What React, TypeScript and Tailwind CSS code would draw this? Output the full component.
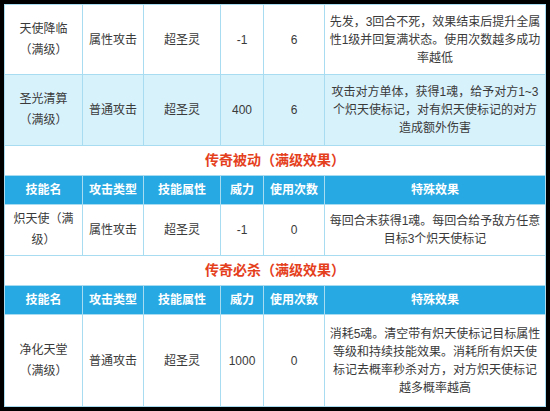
import React from "react";

const cell = "border border-[#a8dcf1] text-center align-middle p-0";

function Lines({ lines, cls }: { lines: string[]; cls: string }) {
  return (
    <div className={cls}>
      {lines.map((l, i) => (
        <div key={i} className="whitespace-nowrap">
          {l}
        </div>
      ))}
    </div>
  );
}

function SkillRow({
  name,
  type,
  attr,
  power,
  times,
  effect,
  h,
  bg,
}: {
  name: string[];
  type: string;
  attr: string;
  power: string;
  times: string;
  effect: string[];
  h: string;
  bg: string;
}) {
  return (
    <tr className={`${h} ${bg}`}>
      <td className={cell}>
        <Lines lines={name} cls="leading-[21px]" />
      </td>
      <td className={cell}>{type}</td>
      <td className={cell}>{attr}</td>
      <td className={cell}>{power}</td>
      <td className={cell}>{times}</td>
      <td className={cell}>
        <Lines lines={effect} cls="leading-[18px]" />
      </td>
    </tr>
  );
}

function Title({ text }: { text: string }) {
  return (
    <tr className="h-[30px] bg-white">
      <td
        colSpan={6}
        className="border border-[#a8dcf1] text-center align-middle p-0 text-[14px] font-bold text-[#e5401d]"
      >
        {text}
      </td>
    </tr>
  );
}

function Header() {
  const hc =
    "border border-[#a8dcf1] text-center align-middle p-0 text-white font-bold text-[12px]";
  return (
    <tr className="h-[29px] bg-[#27a9e3]">
      <th className={hc}>技能名</th>
      <th className={hc}>攻击类型</th>
      <th className={hc}>技能属性</th>
      <th className={hc}>威力</th>
      <th className={hc}>使用次数</th>
      <th className={hc}>特殊效果</th>
    </tr>
  );
}

export default function App() {
  return (
    <div className="w-[550px] h-[411px] bg-black pt-[4px] pl-[4px] overflow-hidden">
      <table className="table-fixed border-collapse w-[541px] bg-white text-[12px] text-[#3a3a3a] font-['Liberation_Sans','Noto_Sans_CJK_SC',sans-serif]">
        <colgroup>
          <col className="w-[78px]" />
          <col className="w-[61px]" />
          <col className="w-[77px]" />
          <col className="w-[43px]" />
          <col className="w-[61px]" />
          <col className="w-[221px]" />
        </colgroup>
        <tbody>
          <SkillRow
            name={["天使降临", "（满级）"]}
            type="属性攻击"
            attr="超圣灵"
            power="-1"
            times="6"
            effect={[
              "先发，3回合不死，效果结束后提升全属",
              "性1级并回复满状态。使用次数越多成功",
              "率越低",
            ]}
            h="h-[70px]"
            bg="bg-white"
          />
          <SkillRow
            name={["圣光清算", "（满级）"]}
            type="普通攻击"
            attr="超圣灵"
            power="400"
            times="6"
            effect={[
              "攻击对方单体，获得1魂，给予对方1~3",
              "个炽天使标记，对有炽天使标记的对方",
              "造成额外伤害",
            ]}
            h="h-[71px]"
            bg="bg-[#d8f2fc]"
          />
          <Title text="传奇被动（满级效果）" />
          <Header />
          <SkillRow
            name={["炽天使（满", "级）"]}
            type="属性攻击"
            attr="超圣灵"
            power="-1"
            times="0"
            effect={["每回合末获得1魂。每回合给予敌方任意", "目标3个炽天使标记"]}
            h="h-[51px]"
            bg="bg-white"
          />
          <Title text="传奇必杀（满级效果）" />
          <Header />
          <SkillRow
            name={["净化天堂", "（满级）"]}
            type="普通攻击"
            attr="超圣灵"
            power="1000"
            times="0"
            effect={[
              "消耗5魂。清空带有炽天使标记目标属性",
              "等级和持续技能效果。消耗所有炽天使",
              "标记去概率秒杀对方，对方炽天使标记",
              "越多概率越高",
            ]}
            h="h-[92px]"
            bg="bg-white"
          />
        </tbody>
      </table>
    </div>
  );
}
